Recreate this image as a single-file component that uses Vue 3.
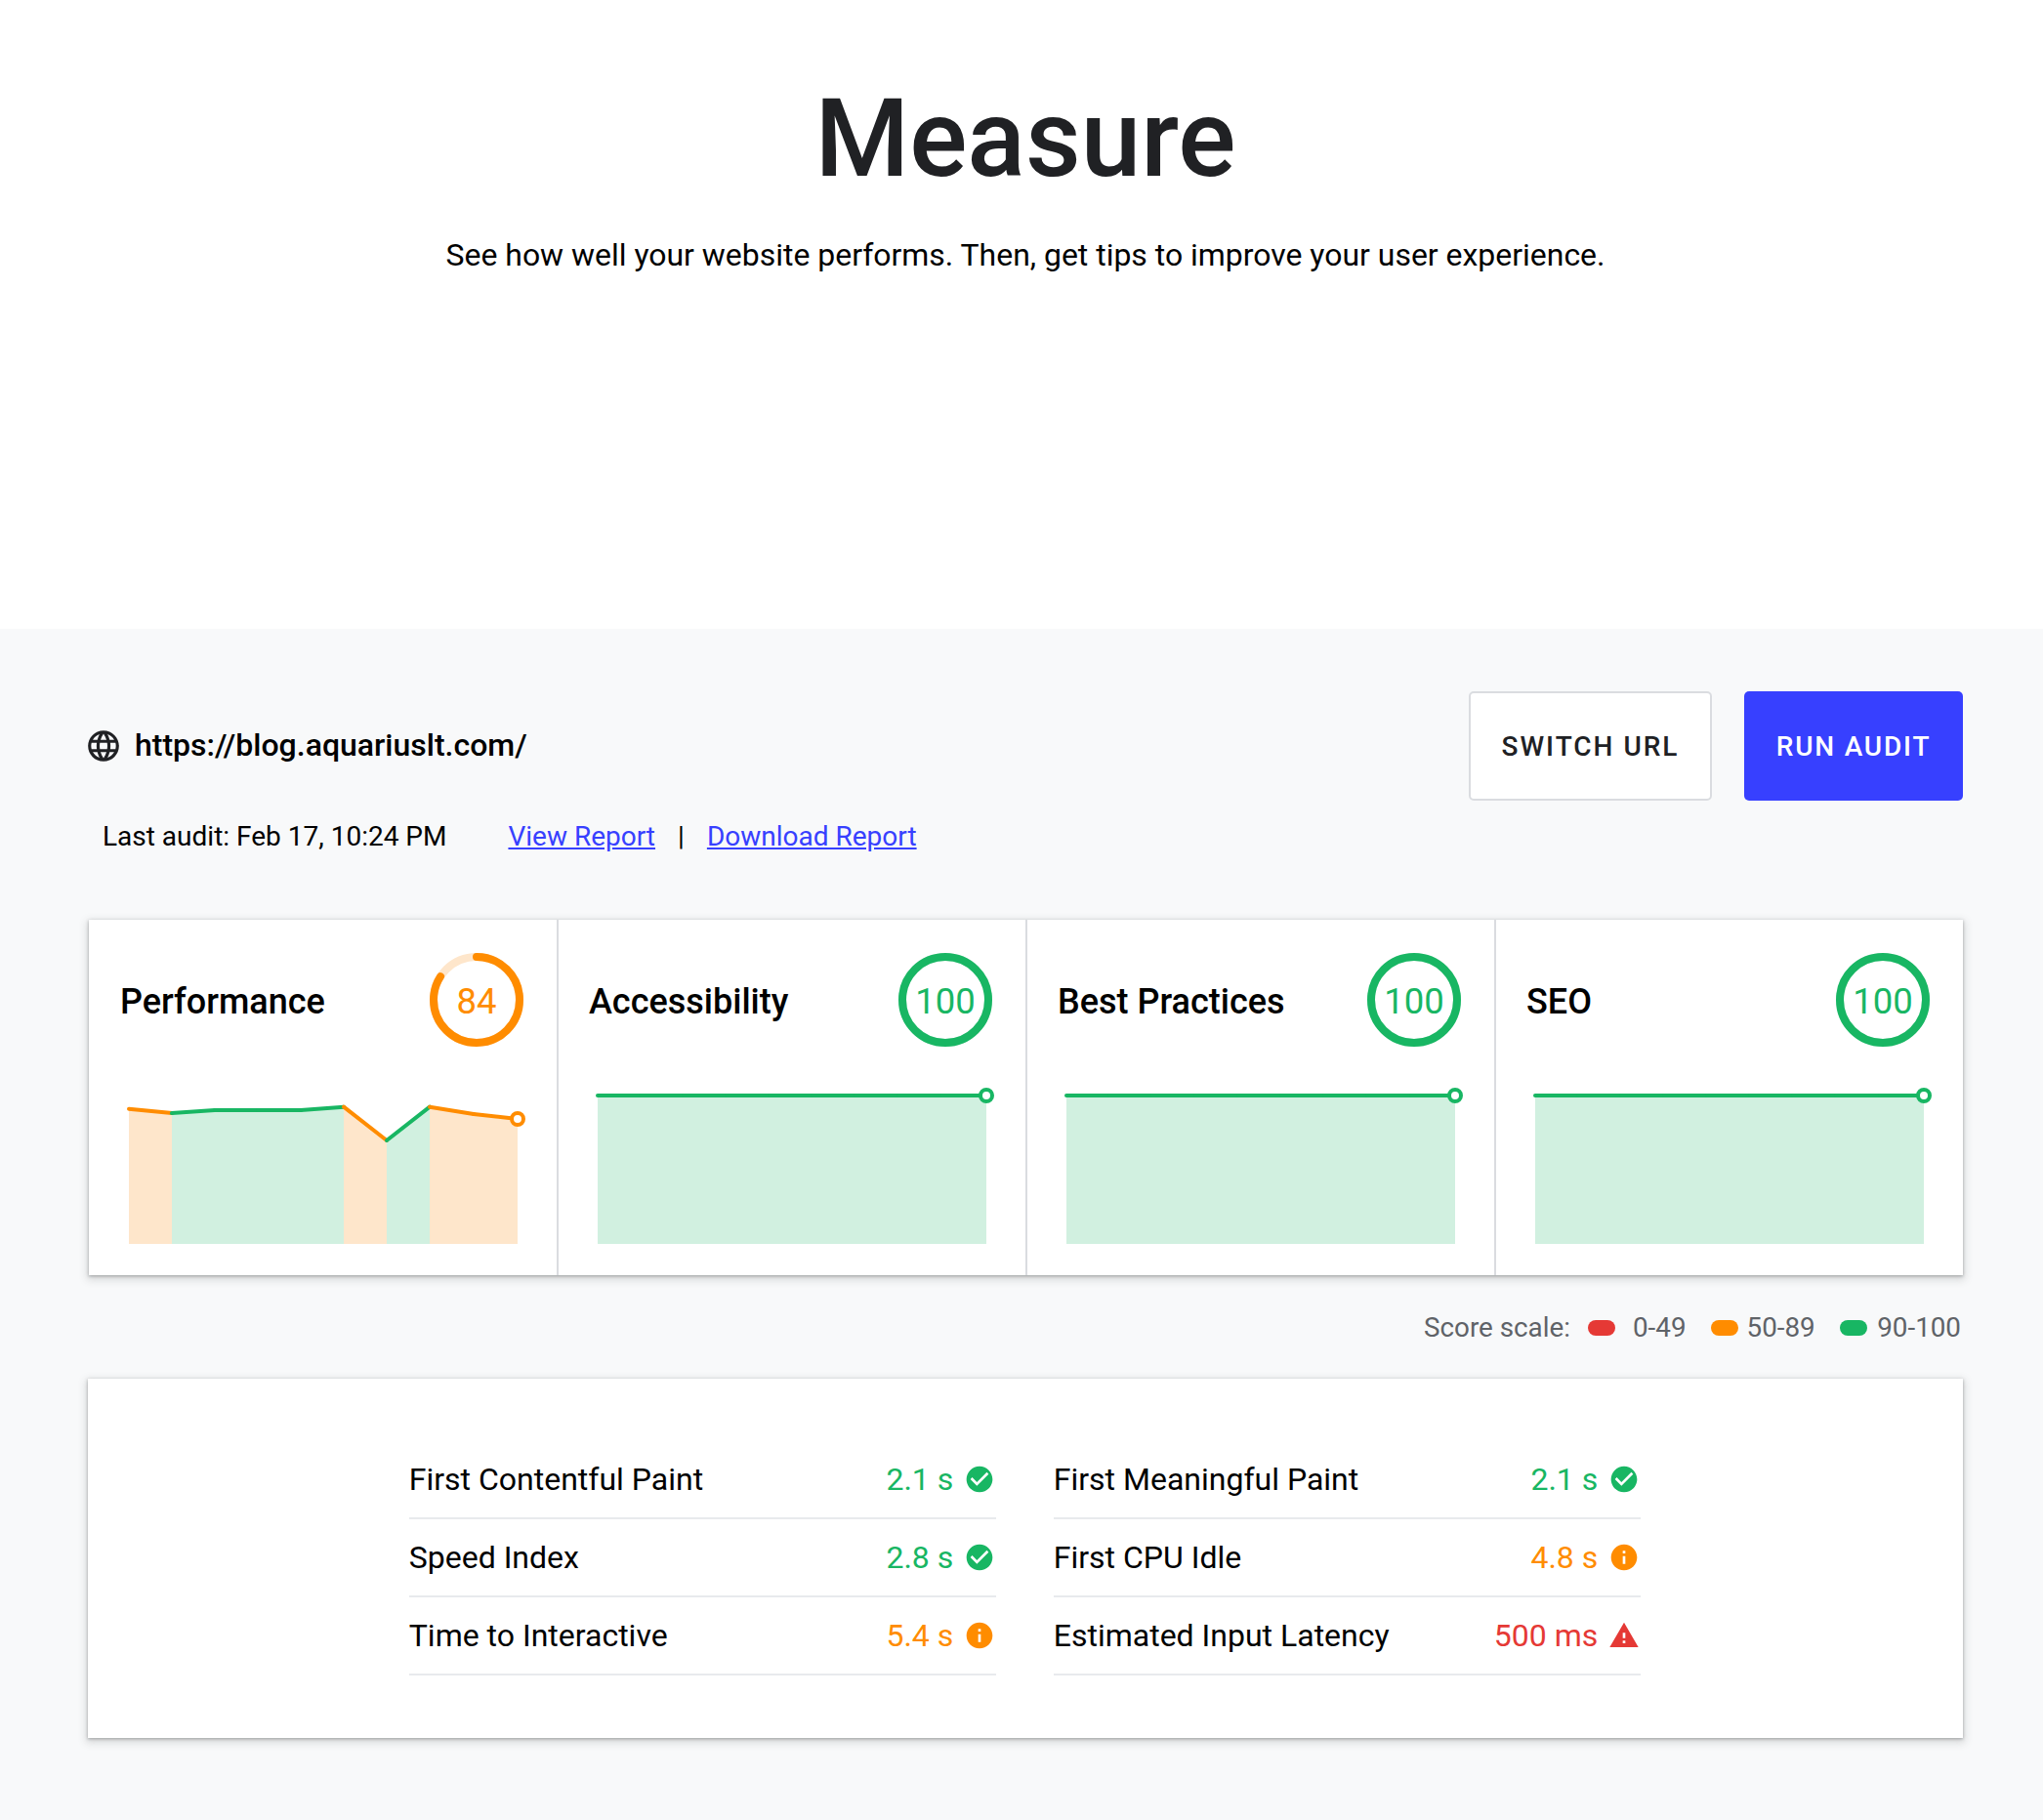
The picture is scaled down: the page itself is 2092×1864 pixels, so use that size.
<script setup>
const categories = [
  { name: "Performance", score: 84, tone: "orange" },
  { name: "Accessibility", score: 100, tone: "green" },
  { name: "Best Practices", score: 100, tone: "green" },
  { name: "SEO", score: 100, tone: "green" },
];

const CHART_BOTTOM = 159;

const chartX = [9, 53, 97, 141, 185, 229, 273, 317, 362, 407];
const perfY = [20.7, 25, 22, 22, 22, 18.7, 53, 18.7, 26, 31];
const perfTones = ["orange", "green", "green", "green", "green", "orange", "green", "orange", "orange"];
const flatY = Array(10).fill(7);
const flatTones = Array(9).fill("green");

function lines(ys, tones) {
  return tones.map((tone, i) => ({
    tone,
    x1: chartX[i],
    x2: chartX[i + 1],
    y1: ys[i],
    y2: ys[i + 1],
  }));
}

// neighbouring segments of one tone become one polygon, so no seams show
function areas(ys, tones) {
  const out = [];
  let start = 0;
  for (let i = 1; i <= tones.length; i++) {
    if (tones[i] === tones[start]) continue;
    const top = [];
    for (let j = start; j <= i; j++) top.push(`${chartX[j]},${ys[j]}`);
    out.push({
      tone: tones[start],
      x: chartX[start],
      points: `${top.join(" ")} ${chartX[i]},${CHART_BOTTOM} ${chartX[start]},${CHART_BOTTOM}`,
    });
    start = i;
  }
  return out;
}

const charts = [
  { y: perfY, lines: lines(perfY, perfTones), areas: areas(perfY, perfTones), tone: "orange" },
  { y: flatY, lines: lines(flatY, flatTones), areas: areas(flatY, flatTones), tone: "green" },
  { y: flatY, lines: lines(flatY, flatTones), areas: areas(flatY, flatTones), tone: "green" },
  { y: flatY, lines: lines(flatY, flatTones), areas: areas(flatY, flatTones), tone: "green" },
];

const RADIUS = 44;
const CIRC = 2 * Math.PI * RADIUS;
const dash = (score) => `${(CIRC * score) / 100} ${CIRC}`;

const metrics = [
  { label: "First Contentful Paint", value: "2.1 s", tone: "green" },
  { label: "First Meaningful Paint", value: "2.1 s", tone: "green" },
  { label: "Speed Index", value: "2.8 s", tone: "green" },
  { label: "First CPU Idle", value: "4.8 s", tone: "orange" },
  { label: "Time to Interactive", value: "5.4 s", tone: "orange" },
  { label: "Estimated Input Latency", value: "500 ms", tone: "red" },
];

const icons = {
  green:
    "M12 2C6.48 2 2 6.48 2 12s4.48 10 10 10 10-4.48 10-10S17.52 2 12 2zm-2 15l-5-5 1.41-1.41L10 14.17l7.59-7.59L19 8l-9 9z",
  orange:
    "M12 2C6.48 2 2 6.48 2 12s4.48 10 10 10 10-4.48 10-10S17.52 2 12 2zm1 15h-2v-6h2v6zm0-8h-2V7h2v2z",
  red: "M1 21h22L12 2 1 21zm12-3h-2v-2h2v2zm0-4h-2v-4h2v4z",
};

const scale = [
  { label: "0-49", tone: "red" },
  { label: "50-89", tone: "orange" },
  { label: "90-100", tone: "green" },
];
</script>

<template>
  <div class="page">
    <header class="hero">
      <h1>Measure</h1>
      <p>See how well your website performs. Then, get tips to improve your user experience.</p>
    </header>

    <main class="panel">
      <div class="toolbar">
        <div class="url">
          <svg class="globe" viewBox="0 0 24 24">
            <path d="M11.99 2C6.47 2 2 6.48 2 12s4.47 10 9.99 10C17.52 22 22 17.52 22 12S17.52 2 11.99 2zm6.93 6h-2.95c-.32-1.25-.78-2.45-1.38-3.56 1.84.63 3.37 1.91 4.33 3.56zM12 4.04c.83 1.2 1.48 2.53 1.91 3.96h-3.82c.43-1.43 1.08-2.76 1.91-3.96zM4.26 14C4.1 13.36 4 12.69 4 12s.1-1.36.26-2h3.38c-.08.66-.14 1.32-.14 2 0 .68.06 1.34.14 2H4.26zm.82 2h2.95c.32 1.25.78 2.45 1.38 3.56-1.84-.63-3.37-1.9-4.33-3.56zm2.95-8H5.08c.96-1.66 2.49-2.93 4.33-3.56C8.81 5.55 8.35 6.75 8.03 8zM12 19.96c-.83-1.2-1.48-2.53-1.91-3.96h3.82c-.43 1.43-1.08 2.76-1.91 3.96zM14.34 14H9.66c-.09-.66-.16-1.32-.16-2 0-.68.07-1.35.16-2h4.68c.09.65.16 1.32.16 2 0 .68-.07 1.34-.16 2zm.25 5.56c.6-1.11 1.06-2.31 1.38-3.56h2.95c-.96 1.65-2.49 2.93-4.33 3.56zM16.36 14c.08-.66.14-1.32.14-2 0-.68-.06-1.34-.14-2h3.38c.16.64.26 1.31.26 2s-.1 1.36-.26 2h-3.38z" />
          </svg>
          <span>https://blog.aquariuslt.com/</span>
        </div>
        <div class="actions">
          <button class="btn btn--ghost">SWITCH URL</button>
          <button class="btn btn--primary">RUN AUDIT</button>
        </div>
      </div>

      <div class="audit">
        <span class="audit__date">Last audit: Feb 17, 10:24 PM</span>
        <a href="#">View Report</a>
        <span class="audit__sep">|</span>
        <a href="#">Download Report</a>
      </div>

      <section class="scores">
        <article v-for="(cat, i) in categories" :key="cat.name" class="score">
          <div class="score__head">
            <h2>{{ cat.name }}</h2>
            <div class="gauge" :class="`tone-${cat.tone}`">
              <svg viewBox="0 0 96 96">
                <circle class="gauge__track" cx="48" cy="48" :r="RADIUS" />
                <circle
                  class="gauge__arc"
                  cx="48"
                  cy="48"
                  :r="RADIUS"
                  :stroke-dasharray="dash(cat.score)"
                  transform="rotate(-90 48 48)"
                />
              </svg>
              <span>{{ cat.score }}</span>
            </div>
          </div>
          <svg class="chart" viewBox="0 0 416 170">
            <polygon
              v-for="a in charts[i].areas"
              :key="'a' + a.x"
              :points="a.points"
              :class="`area-${a.tone}`"
            />
            <line
              v-for="s in charts[i].lines"
              :key="'l' + s.x1"
              :x1="s.x1"
              :y1="s.y1"
              :x2="s.x2"
              :y2="s.y2"
              :class="`line-${s.tone}`"
            />
            <circle
              :cx="chartX[9]"
              :cy="charts[i].y[9]"
              r="6"
              fill="#fff"
              :class="`line-${charts[i].tone}`"
            />
          </svg>
        </article>
      </section>

      <div class="legend">
        <span class="legend__title">Score scale:</span>
        <span v-for="item in scale" :key="item.label" class="legend__item" :class="`legend__item--${item.tone}`">
          <i :class="`pill-${item.tone}`" />{{ item.label }}
        </span>
      </div>

      <section class="metrics">
        <div class="metrics__grid">
          <div v-for="m in metrics" :key="m.label" class="metric">
            <span class="metric__label">{{ m.label }}</span>
            <span class="metric__value" :class="`text-${m.tone}`">{{ m.value }}</span>
            <svg class="metric__icon" :class="`fill-${m.tone}`" viewBox="0 0 24 24">
              <path :d="icons[m.tone]" />
            </svg>
          </div>
        </div>
      </section>
    </main>
  </div>
</template>

<style>
html,
body {
  margin: 0;
  background: #fff;
}
</style>

<style scoped>
.page {
  font-family: Roboto, "Liberation Sans", sans-serif;
  color: #202124;
  overflow: hidden;
}

.hero {
  height: 644px;
  box-sizing: border-box;
  padding: 78px 82px 0 90px;
  text-align: center;
}
.hero h1 {
  margin: 0;
  font-size: 110.5px;
  line-height: 128px;
  font-weight: 500;
}
.hero p {
  margin: 35px 0 0;
  font-size: 31.95px;
  line-height: 40px;
  color: #000;
}

.panel {
  background: #f8f9fa;
  padding: 64px 82px 84px 90px;
}

.toolbar {
  display: flex;
  align-items: center;
  justify-content: space-between;
}
.url {
  display: flex;
  align-items: center;
  gap: 13px;
  font-size: 32px;
  font-weight: 500;
  color: #000;
}
.url span {
  position: relative;
  top: -1px;
}
.globe {
  width: 38px;
  height: 38px;
  margin-left: -3px;
  fill: #202124;
}
.actions {
  display: flex;
  gap: 33px;
}
.btn {
  height: 112px;
  box-sizing: border-box;
  border-radius: 5px;
  font-family: inherit;
  font-size: 28px;
  font-weight: 500;
  letter-spacing: 2px;
}
.btn--ghost {
  width: 249px;
  background: #fff;
  border: 2px solid #dadce0;
  color: #202124;
}
.btn--primary {
  width: 224px;
  background: #3740ff;
  border: 0;
  color: #fff;
  letter-spacing: 1.8px;
}

.audit {
  display: flex;
  align-items: center;
  margin-top: 17px;
  padding-left: 15px;
  font-size: 28px;
  line-height: 40px;
  color: #000;
}
.audit a {
  color: #3740ff;
}
.audit__date {
  margin-right: 63px;
}
.audit__sep {
  margin: 0 23px;
}

.scores {
  display: grid;
  grid-template-columns: repeat(3, 480px) minmax(0, 1fr);
  margin-top: 65px;
  margin-left: 1px;
  background: #fff;
  box-shadow: 0 1px 3px rgba(60, 64, 67, 0.4), 0 3px 8px 2px rgba(60, 64, 67, 0.17);
}
.score {
  height: 364px;
  box-sizing: border-box;
  padding: 34px 32px 0;
  box-shadow: -1px 0 0 #dadce0, inset 1px 0 0 #dadce0;
}
.score:first-child {
  box-shadow: none;
}
.score__head {
  display: flex;
  align-items: center;
  justify-content: space-between;
  padding-right: 3px;
}
.score:last-child .score__head {
  padding-right: 2px;
}
.score__head h2 {
  margin: 0;
  padding-top: 3px;
  font-size: 36px;
  font-weight: 500;
  color: #000;
}
.gauge {
  position: relative;
  width: 96px;
  height: 96px;
  display: flex;
  align-items: center;
  justify-content: center;
  font-size: 36.5px;
}
.gauge span {
  padding-top: 2px;
}
.gauge svg {
  position: absolute;
  inset: 0;
  fill: none;
  stroke-width: 8;
  stroke-linecap: round;
}
.gauge__track {
  stroke-linecap: butt;
}
.tone-orange {
  color: #ff8c00;
}
.tone-orange .gauge__track {
  stroke: #fee6cb;
}
.tone-orange .gauge__arc {
  stroke: #ff8c00;
}
.tone-green {
  color: #18b663;
}
.tone-green .gauge__track {
  stroke: #d1f0e0;
}
.tone-green .gauge__arc {
  stroke: #18b663;
}

.chart {
  display: block;
  width: 416px;
  height: 170px;
  margin-top: 43px;
  overflow: visible;
}
.area-orange {
  fill: #fee6cb;
}
.area-green {
  fill: #d1f0e0;
}
.line-orange {
  stroke: #ff8c00;
  stroke-width: 4;
  stroke-linecap: round;
}
.line-green {
  stroke: #18b663;
  stroke-width: 4;
  stroke-linecap: round;
}

.legend {
  display: flex;
  justify-content: flex-end;
  align-items: center;
  margin-top: 34px;
  padding-right: 2px;
  font-size: 27.8px;
  line-height: 40px;
  color: #5f6368;
}
.legend__title {
  margin-right: 18px;
}
.legend__item {
  display: flex;
  align-items: center;
  gap: 10.5px;
  margin-right: 25px;
}
.legend__item:last-child {
  margin-right: 0;
}
.legend__item--red {
  gap: 18px;
}
.legend__item--orange {
  gap: 9px;
}
.legend i {
  width: 28px;
  height: 16px;
  border-radius: 8px;
}
.pill-red {
  background: #e53935;
}
.pill-orange {
  background: #ff8c00;
}
.pill-green {
  background: #18b663;
}

.metrics {
  margin-top: 32px;
  padding: 64px 1.5px 64px 0;
  background: #fff;
  box-shadow: 0 1px 3px rgba(60, 64, 67, 0.4), 0 3px 8px 2px rgba(60, 64, 67, 0.17);
}
.metrics__grid {
  display: grid;
  grid-template-columns: 601px 601px;
  column-gap: 59px;
  justify-content: center;
}
.metric {
  display: flex;
  align-items: center;
  height: 80px;
  box-sizing: border-box;
  padding-right: 1px;
  border-bottom: 2px solid #e8eaed;
  font-size: 32px;
}
.metric__label {
  flex: 1;
  color: #000;
}
.metric__value {
  margin-right: 10.5px;
}
.metric__icon {
  width: 32px;
  height: 32px;
}
.text-green {
  color: #18b663;
}
.text-orange {
  color: #ff8c00;
}
.text-red {
  color: #e53935;
}
.fill-green {
  fill: #18b663;
}
.fill-orange {
  fill: #ff8c00;
}
.fill-red {
  fill: #e53935;
}
</style>
